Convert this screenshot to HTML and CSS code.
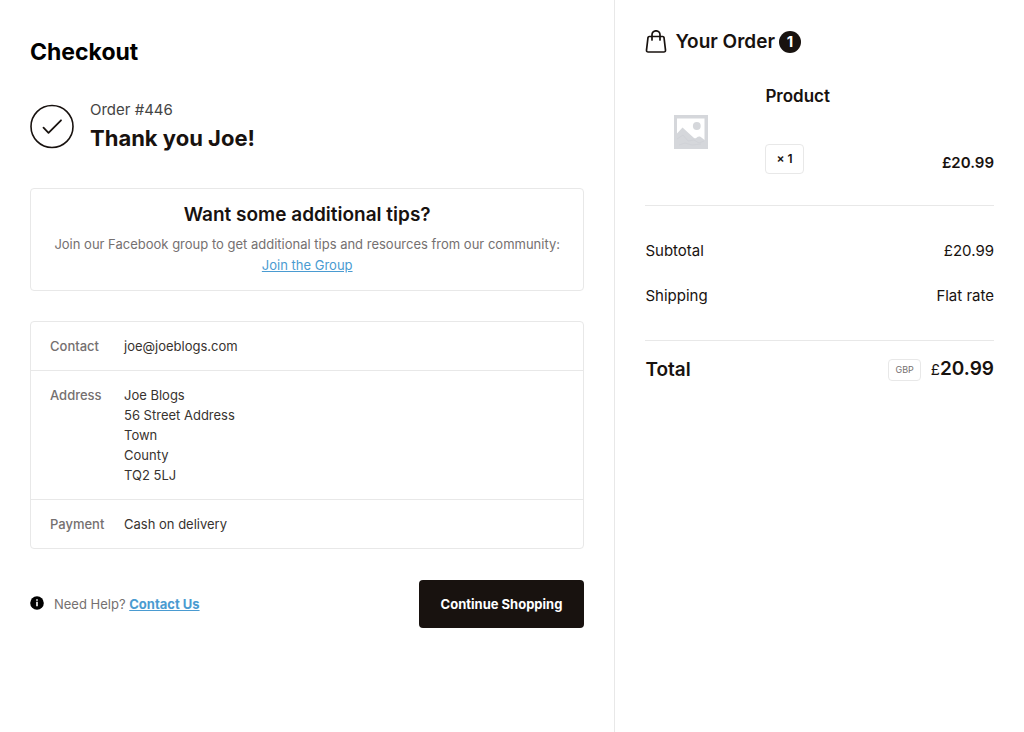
FILE: index.html
```html
<!DOCTYPE html>
<html lang="en">
  <head>
    <meta charset="UTF-8" />
    <meta name="viewport" content="width=device-width, initial-scale=1.0" />
    <title>Checkout</title>
    <link rel="stylesheet" href="styles.css">
  </head>
  <body>
    <div class="checkout">
      <main class="main">
        <h1 class="page-title">Checkout</h1>

        <div class="thank-you">
          <svg class="check-icon" viewBox="0 0 44 44" fill="none" stroke="#18120f">
            <circle cx="22" cy="22.500" r="21" stroke-width="1.600" />
            <path d="M13.500 23.700l5 5.100L31 16.300" stroke-width="1.800" stroke-linecap="round" stroke-linejoin="round" />
          </svg>
          <div>
            <p class="order-number">Order #446</p>
            <h2 class="thank-you-title">Thank you Joe!</h2>
          </div>
        </div>

        <section class="box tips">
          <h3>Want some additional tips?</h3>
          <p>Join our Facebook group to get additional tips and resources from our community: <a href="#">Join the Group</a></p>
        </section>

        <dl class="box details">
          <div class="details-row">
            <dt>Contact</dt>
            <dd>joe@joeblogs.com</dd>
          </div>
          <div class="details-row">
            <dt>Address</dt>
            <dd>Joe Blogs<br />56 Street Address<br />Town<br />County<br />TQ2 5LJ</dd>
          </div>
          <div class="details-row">
            <dt>Payment</dt>
            <dd>Cash on delivery</dd>
          </div>
        </dl>

        <div class="actions">
          <p class="help">
            <svg class="info-icon" viewBox="0 0 14 14">
              <circle cx="7" cy="7" r="6.800" fill="#000" />
              <path d="M6.200 3.300h1.600v1.400H6.200zM6.200 5.800h1.600v4.500H6.200z" fill="#fff" />
            </svg>
            <span>Need Help? <a href="#">Contact Us</a></span>
          </p>
          <button type="button" class="continue">Continue Shopping</button>
        </div>
      </main>

      <aside class="order">
        <h2 class="order-title">
          <svg class="bag-icon" viewBox="0 0 22 24" fill="none" stroke="#18120f" stroke-width="1.700" stroke-linecap="round" stroke-linejoin="round">
            <path d="M4.200 6.500h13.600q1 0 1.200 1l1.500 12.600q.1 1.900-1.700 1.900H3.200q-1.800 0-1.700-1.900L3 7.500q.2-1 1.200-1z" />
            <path d="M7 10V4.800a4 4 0 0 1 8 0V10" />
          </svg>
          Your Order
          <span class="count">1</span>
        </h2>

        <div class="product">
          <div class="product-image">
            <svg viewBox="0 0 34 34">
              <path d="M0 0h34v34H0z" fill="#d5d7db" />
              <path d="M3 3.500h27.500v21.500q-2-2-4.500-3.500-2-.3-3.500 1.300-1.200.9-2.500.2L8.500 12.500 3 18.500z" fill="#fff" />
              <circle cx="22.800" cy="11" r="3.900" fill="#d5d7db" />
              <path d="M3 24l6-4 5 6 6-1 5 3 5-2M5 30l6-2 7 2 9-1" fill="none" stroke="#d0d2d7" stroke-width="1" />
            </svg>
          </div>
          <div class="product-info">
            <h3>Product</h3>
            <div class="product-bottom">
              <span class="quantity">× 1</span>
              <span class="product-price">£20.99</span>
            </div>
          </div>
        </div>

        <table class="totals">
          <tbody>
            <tr>
              <th scope="row">Subtotal</th>
              <td>£20.99</td>
            </tr>
            <tr>
              <th scope="row">Shipping</th>
              <td>Flat rate</td>
            </tr>
          </tbody>
        </table>

        <div class="total">
          <span class="total-label">Total</span>
          <span class="currency">GBP</span>
          <span class="total-amount"><span class="symbol">£</span>20.99</span>
        </div>
      </aside>
    </div>
  </body>
</html>
```
FILE: styles.css
```css
* {
  box-sizing: border-box;
}
body {
  font-family: Inter, Arial, sans-serif;
  font-size: 13px;
  line-height: 20px;
  color: #18120f;
  background-color: #fff;
  margin: 0;
}
h1,
h2,
h3,
p,
dl,
dd {
  margin: 0;
}
a {
  color: #4a9bd1;
}
svg {
  display: block;
  flex-shrink: 0;
}
.checkout {
  display: grid;
  grid-template-columns: 3fr 2fr;
  min-height: 100vh;
}
.main {
  padding: 36px 30px 30px;
}
.page-title {
  font-size: 23px;
  line-height: 32px;
  color: #000;
}
.thank-you {
  display: flex;
  align-items: center;
  gap: 16px;
  margin-top: 30px;
}
.check-icon {
  width: 44px;
  height: 44px;
  overflow: visible;
}
.order-number {
  font-size: 15px;
  line-height: 24px;
  color: #444;
}
.thank-you-title {
  font-size: 22px;
  line-height: 32px;
}
.box {
  border: 1px solid #e8e8e8;
  border-radius: 4px;
}
.tips {
  margin-top: 34px;
  padding: 12px 20px 14px;
  text-align: center;
  color: #757070;
}
.tips h3 {
  font-size: 19px;
  font-weight: 600;
  line-height: 28px;
  margin-bottom: 5px;
  color: #18120f;
}
.tips p {
  line-height: 21px;
}
.details {
  margin-top: 30px;
}
.details-row {
  display: grid;
  grid-template-columns: 74px 1fr;
  padding: 14px 19px;
}
.details-row + .details-row {
  border-top: 1px solid #e8e8e8;
}
.details dt {
  font-weight: 500;
  color: #757070;
}
.details dd {
  color: #38332f;
}
.actions {
  display: flex;
  align-items: center;
  justify-content: space-between;
  margin-top: 31px;
}
.help {
  display: flex;
  align-items: flex-start;
  gap: 10px;
  color: #757070;
}
.help a {
  font-weight: 700;
}
.info-icon {
  width: 14px;
  height: 14px;
  margin-top: 2px;
}
.continue {
  padding: 14px 22px;
  border: 0;
  border-radius: 4px;
  background-color: #18120f;
  color: #fff;
  font-family: inherit;
  font-size: 13px;
  font-weight: 700;
  line-height: 20px;
  cursor: pointer;
}
.order {
  padding: 28px 30px;
  border-left: 1px solid #e8e8e8;
}
.order-title {
  display: flex;
  align-items: center;
  gap: 4px;
  font-size: 19px;
  font-weight: 600;
  line-height: 28px;
}
.bag-icon {
  width: 22px;
  height: 24px;
  margin-right: 4px;
}
.count {
  width: 22px;
  height: 22px;
  border-radius: 50%;
  background-color: #18120f;
  color: #fff;
  font-size: 15px;
  font-weight: 700;
  line-height: 22px;
  text-align: center;
}
.product {
  display: grid;
  grid-template-columns: 90px 1fr;
  gap: 30px;
  margin-top: 28px;
  padding-bottom: 31px;
  border-bottom: 1px solid #e8e8e8;
}
.product-image {
  display: flex;
  align-items: center;
  justify-content: center;
  padding: 6px 0 0 2px;
}
.product-image svg {
  width: 34px;
  height: 34px;
}
.product-info h3 {
  font-size: 17px;
  font-weight: 600;
  line-height: 24px;
}
.product-bottom {
  display: flex;
  align-items: flex-end;
  justify-content: space-between;
  margin-top: 36px;
}
.quantity {
  padding: 4px 10px;
  border: 1px solid #e8e8e8;
  border-radius: 4px;
  font-size: 12px;
  font-weight: 600;
}
.product-price {
  font-size: 15px;
  font-weight: 600;
  line-height: 22px;
}
.totals {
  width: 100%;
  border-collapse: collapse;
  margin: 22px 0;
  font-size: 15px;
  line-height: 25px;
}
.totals th,
.totals td {
  padding: 10px 0;
  font-weight: 400;
  text-align: left;
}
.totals td {
  text-align: right;
}
.total {
  display: flex;
  align-items: center;
  gap: 10px;
  padding-top: 14px;
  border-top: 1px solid #e8e8e8;
  font-size: 19px;
  line-height: 28px;
}
.total-label {
  margin-right: auto;
  font-weight: 600;
}
.currency {
  padding: 0 6px;
  border: 1px solid #e8e8e8;
  border-radius: 4px;
  color: #757070;
  font-size: 9px;
  line-height: 20px;
}
.total-amount {
  font-weight: 600;
}
.symbol {
  font-size: 15px;
  font-weight: 400;
}
```
